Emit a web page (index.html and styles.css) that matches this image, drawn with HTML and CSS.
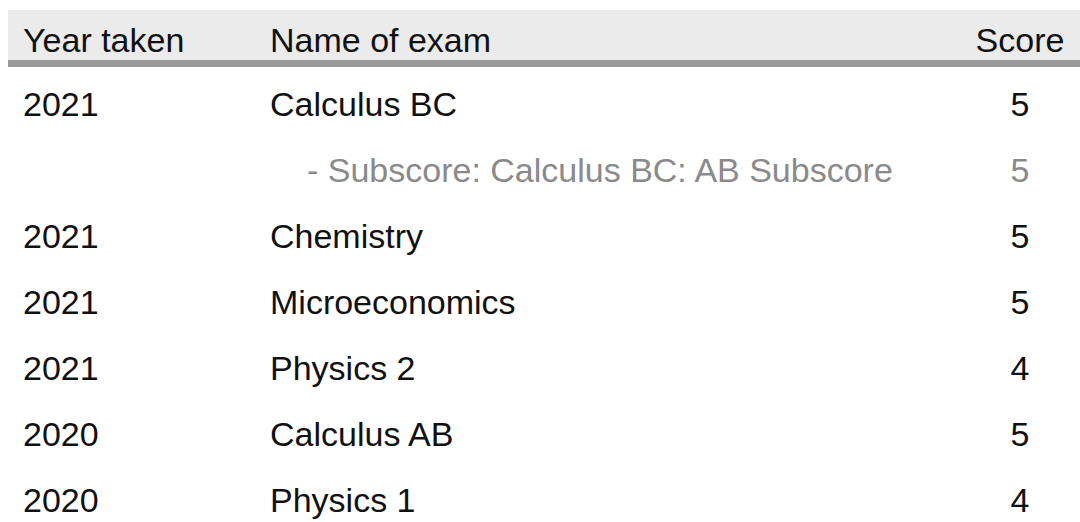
FILE: index.html
```html
<!DOCTYPE html>
<html lang="en">
<head>
  <meta charset="UTF-8">
  <meta name="viewport" content="width=device-width, initial-scale=1.0">
  <title>AP Scores</title>
  <link rel="stylesheet" href="styles.css">
</head>
<body>

  <table class="scores">
    <colgroup>
      <col class="col-year">
      <col class="col-name">
      <col class="col-score">
    </colgroup>
    <thead>
      <tr>
        <th>Year taken</th>
        <th>Name of exam</th>
        <th class="score">Score</th>
      </tr>
    </thead>
    <tbody>
      <tr>
        <td>2021</td>
        <td>Calculus BC</td>
        <td class="score">5</td>
      </tr>
      <tr class="subscore">
        <td></td>
        <td class="sub-name">- Subscore: Calculus BC: AB Subscore</td>
        <td class="score">5</td>
      </tr>
      <tr>
        <td>2021</td>
        <td>Chemistry</td>
        <td class="score">5</td>
      </tr>
      <tr>
        <td>2021</td>
        <td>Microeconomics</td>
        <td class="score">5</td>
      </tr>
      <tr>
        <td>2021</td>
        <td>Physics 2</td>
        <td class="score">4</td>
      </tr>
      <tr>
        <td>2020</td>
        <td>Calculus AB</td>
        <td class="score">5</td>
      </tr>
      <tr>
        <td>2020</td>
        <td>Physics 1</td>
        <td class="score">4</td>
      </tr>
    </tbody>
  </table>

</body>
</html>
```

FILE: styles.css
```css
* {
  margin: 0;
  padding: 0;
  box-sizing: border-box;
}

body {
  font-family: 'Liberation Sans', Arial, Helvetica, sans-serif;
  background: #fff;
  color: #111;
  margin: 10px 0 0 8px;
  overflow: hidden;
}

.scores {
  width: 1072px;
  border-collapse: collapse;
  table-layout: fixed;
  font-size: 34px;
  line-height: 36px;
}

.col-year {
  width: 247px;
}

.col-score {
  width: 120px;
}

.scores th {
  font-weight: normal;
  text-align: left;
  background: #ebebeb;
  padding: 12px 15px 2px;
  border-bottom: 7px solid #999;
  white-space: nowrap;
}

.scores td {
  padding: 19px 15px 11px;
  white-space: nowrap;
}

.scores .score {
  text-align: center;
  padding-left: 0;
  padding-right: 0;
}

.subscore td {
  color: #8a8a8a;
}

.scores .sub-name {
  padding-left: 52px;
}
```
